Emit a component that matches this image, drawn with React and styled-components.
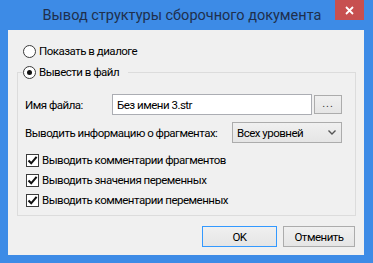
import React from "react";
import styled, { createGlobalStyle } from "styled-components";

const Global = createGlobalStyle`
  html, body { margin: 0; padding: 0; background: #ffffff; }
  body { font-family: Roboto, "Open Sans", "Liberation Sans", sans-serif; }
  * { box-sizing: border-box; }
`;

const Window = styled.div`
  width: 373px;
  height: 263px;
  background: #3d8be6;
  display: flex;
  flex-direction: column;
  padding: 0 9px 8px 8px;
`;

const TitleBar = styled.div`
  height: 30px;
  display: grid;
  grid-template-columns: 1fr auto 1fr;
  margin: 0 -9px 0 -8px;
  padding-right: 9px;
`;

const Title = styled.div`
  grid-column: 2;
  font-size: 14.5px;
  line-height: 31px;
  color: #1f2f4c;
  white-space: nowrap;
`;

const CloseButton = styled.div`
  grid-column: 3;
  justify-self: end;
  width: 29px;
  height: 20px;
  background: #c75050;
  display: flex;
  align-items: center;
  justify-content: center;
`;

const Client = styled.div`
  flex: 1;
  background: #f0f0f0;
  display: flex;
  flex-direction: column;
  padding: 13px 8px 8px 9px;
  font-size: 11.5px;
  letter-spacing: -0.5px;
  color: #000;
`;

const ChoiceRow = styled.label`
  display: flex;
  align-items: center;
  height: 16px;
  gap: 3px;
  margin-left: ${(p) => p.$indent || 0}px;
  white-space: nowrap;
`;

const RadioMark = styled.span`
  width: 13px;
  height: 13px;
  border-radius: 50%;
  border: 1px solid #3a3a3a;
  background: #fff;
  display: flex;
  align-items: center;
  justify-content: center;
  flex: none;
  &::after {
    content: "";
    width: 5px;
    height: 5px;
    border-radius: 50%;
    background: ${(p) => (p.$checked ? "#111" : "transparent")};
  }
`;

const Group = styled.fieldset`
  margin: 5px 0 0 0;
  border: 1px solid #dcdcdc;
  padding: 14px 13px 5px 7px;
  display: flex;
  flex-direction: column;
  min-width: 0;
`;

const Legend = styled.legend`
  padding: 0 9px 0 0;
  margin-left: -2px;
`;

const FieldRow = styled.div`
  display: flex;
  align-items: center;
  height: 21px;
  margin-bottom: ${(p) => p.$after || 0}px;
`;

const FieldLabel = styled.span`
  width: ${(p) => p.$width}px;
  flex: none;
  white-space: nowrap;
`;

const TextBox = styled.input`
  width: 200px;
  height: 21px;
  border: 1px solid #abadb3;
  background: #fff;
  font: inherit;
  letter-spacing: inherit;
  color: #000;
  padding: 0 4px;
  outline: none;
`;

const SmallButton = styled.div`
  width: 28px;
  height: 19px;
  margin-left: 2px;
  border: 1px solid #acacac;
  background: linear-gradient(#f0f0f0, #e5e5e5);
  display: flex;
  align-items: center;
  justify-content: center;
  color: #333;
  font-size: 11px;
  letter-spacing: 1px;
  padding-bottom: 2px;
`;

const Combo = styled.div`
  width: 110px;
  height: 21px;
  border: 1px solid #acacac;
  background: linear-gradient(#f0f0f0, #e5e5e5);
  display: flex;
  align-items: center;
  justify-content: space-between;
  padding: 0 5px 0 4px;
  white-space: nowrap;
`;

const CheckRow = styled.label`
  display: flex;
  align-items: center;
  height: 20px;
  gap: 3px;
  margin-left: 1px;
  white-space: nowrap;
`;

const CheckMark = styled.span`
  width: 13px;
  height: 13px;
  border: 1px solid #3a3a3a;
  background: #fff;
  display: flex;
  align-items: center;
  justify-content: center;
  flex: none;
`;

const ButtonBar = styled.div`
  margin-top: auto;
  display: flex;
  justify-content: flex-end;
  gap: 6px;
  padding-right: 1px;
`;

const DialogButton = styled.div`
  width: ${(p) => p.$width}px;
  height: 21px;
  border: 1px solid ${(p) => (p.$default ? "#3399ff" : "#acacac")};
  background: linear-gradient(#f0f0f0, #e5e5e5);
  display: flex;
  align-items: center;
  justify-content: center;
  white-space: nowrap;
`;

const Radio = ({ checked, children, indent }) => (
  <ChoiceRow $indent={indent}>
    <RadioMark $checked={checked} />
    {children}
  </ChoiceRow>
);

const Check = ({ children }) => (
  <CheckRow>
    <CheckMark>
      <svg width="11" height="11" viewBox="0 0 11 11">
        <path d="M1.5 5.5 L4.2 8.3 L9.6 1.8" fill="none" stroke="#111" strokeWidth="2.1" />
      </svg>
    </CheckMark>
    {children}
  </CheckRow>
);

export default function App() {
  return (
    <>
      <Global />
      <Window>
        <TitleBar>
          <Title>Вывод структуры сборочного документа</Title>
          <CloseButton>
            <svg width="9" height="9" viewBox="0 0 9 9">
              <path d="M1 1 L8 8 M8 1 L1 8" stroke="#fff" strokeWidth="1.8" />
            </svg>
          </CloseButton>
        </TitleBar>
        <Client>
          <Radio indent={6}>Показать в диалоге</Radio>
          <Group>
            <Legend>
              <Radio checked>Вывести в файл</Radio>
            </Legend>
            <FieldRow $after={7}>
              <FieldLabel $width={87}>Имя файла:</FieldLabel>
              <TextBox readOnly value="Без имени 3.str" />
              <SmallButton>...</SmallButton>
            </FieldRow>
            <FieldRow $after={7}>
              <FieldLabel $width={207}>Выводить информацию о фрагментах:</FieldLabel>
              <Combo>
                Всех уровней
                <svg width="8" height="5" viewBox="0 0 8 5">
                  <path d="M0.5 0.5 L4 4 L7.5 0.5" fill="none" stroke="#555" strokeWidth="1.4" />
                </svg>
              </Combo>
            </FieldRow>
            <Check>Выводить комментарии фрагментов</Check>
            <Check>Выводить значения переменных</Check>
            <Check>Выводить комментарии переменных</Check>
          </Group>
          <ButtonBar>
            <DialogButton $default $width={75}>OK</DialogButton>
            <DialogButton $width={72}>Отменить</DialogButton>
          </ButtonBar>
        </Client>
      </Window>
    </>
  );
}
